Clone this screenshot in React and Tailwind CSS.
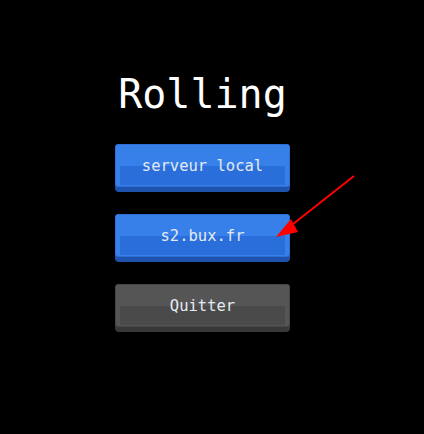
const BUTTONS = [
  { label: "serveur local", tone: "blue" },
  { label: "s2.bux.fr", tone: "blue" },
  { label: "Quitter", tone: "gray" },
];

const TONES = {
  blue: {
    base: "bg-[#1d52ad]",
    face: "bg-[#3780ea] border-[#2e6fd6]",
    inner: "bg-[#2a6edb]",
  },
  gray: {
    base: "bg-[#383838]",
    face: "bg-[#555555] border-[#464646]",
    inner: "bg-[#4a4a4a]",
  },
};

function MenuButton({ label, tone }) {
  const t = TONES[tone];
  return (
    <div className={`w-[175px] rounded-[4px] pb-[5px] ${t.base}`}>
      <div className={`relative h-[43px] rounded-[3px] border px-[4px] pt-[21px] pb-[2px] ${t.face}`}>
        <div className={`h-[19px] ${t.inner}`} />
        <span className="absolute inset-0 flex items-center justify-center pt-[2px] text-[15.5px] text-[#e4eaf2] font-['DejaVu_Sans_Mono',monospace]">
          {label}
        </span>
      </div>
    </div>
  );
}

export default function App() {
  return (
    <div className="relative h-[434px] w-[424px] bg-black">
      <div className="ml-[115px] flex w-[175px] flex-col items-center pt-[70px]">
        <h1 className="mb-[26px] text-[40px] leading-[48px] text-white font-['DejaVu_Sans_Mono',monospace]">
          Rolling
        </h1>
        <div className="flex flex-col gap-[22px]">
          {BUTTONS.map((b) => (
            <MenuButton key={b.label} {...b} />
          ))}
        </div>
      </div>

      {/* red pointer arrow */}
      <svg className="absolute left-0 top-0" width="424" height="434">
        <line x1="354" y1="176" x2="288" y2="228" stroke="#ff0000" strokeWidth="2" />
        <polygon points="276,237 291,219 298,232" fill="#ff0000" />
      </svg>
    </div>
  );
}
